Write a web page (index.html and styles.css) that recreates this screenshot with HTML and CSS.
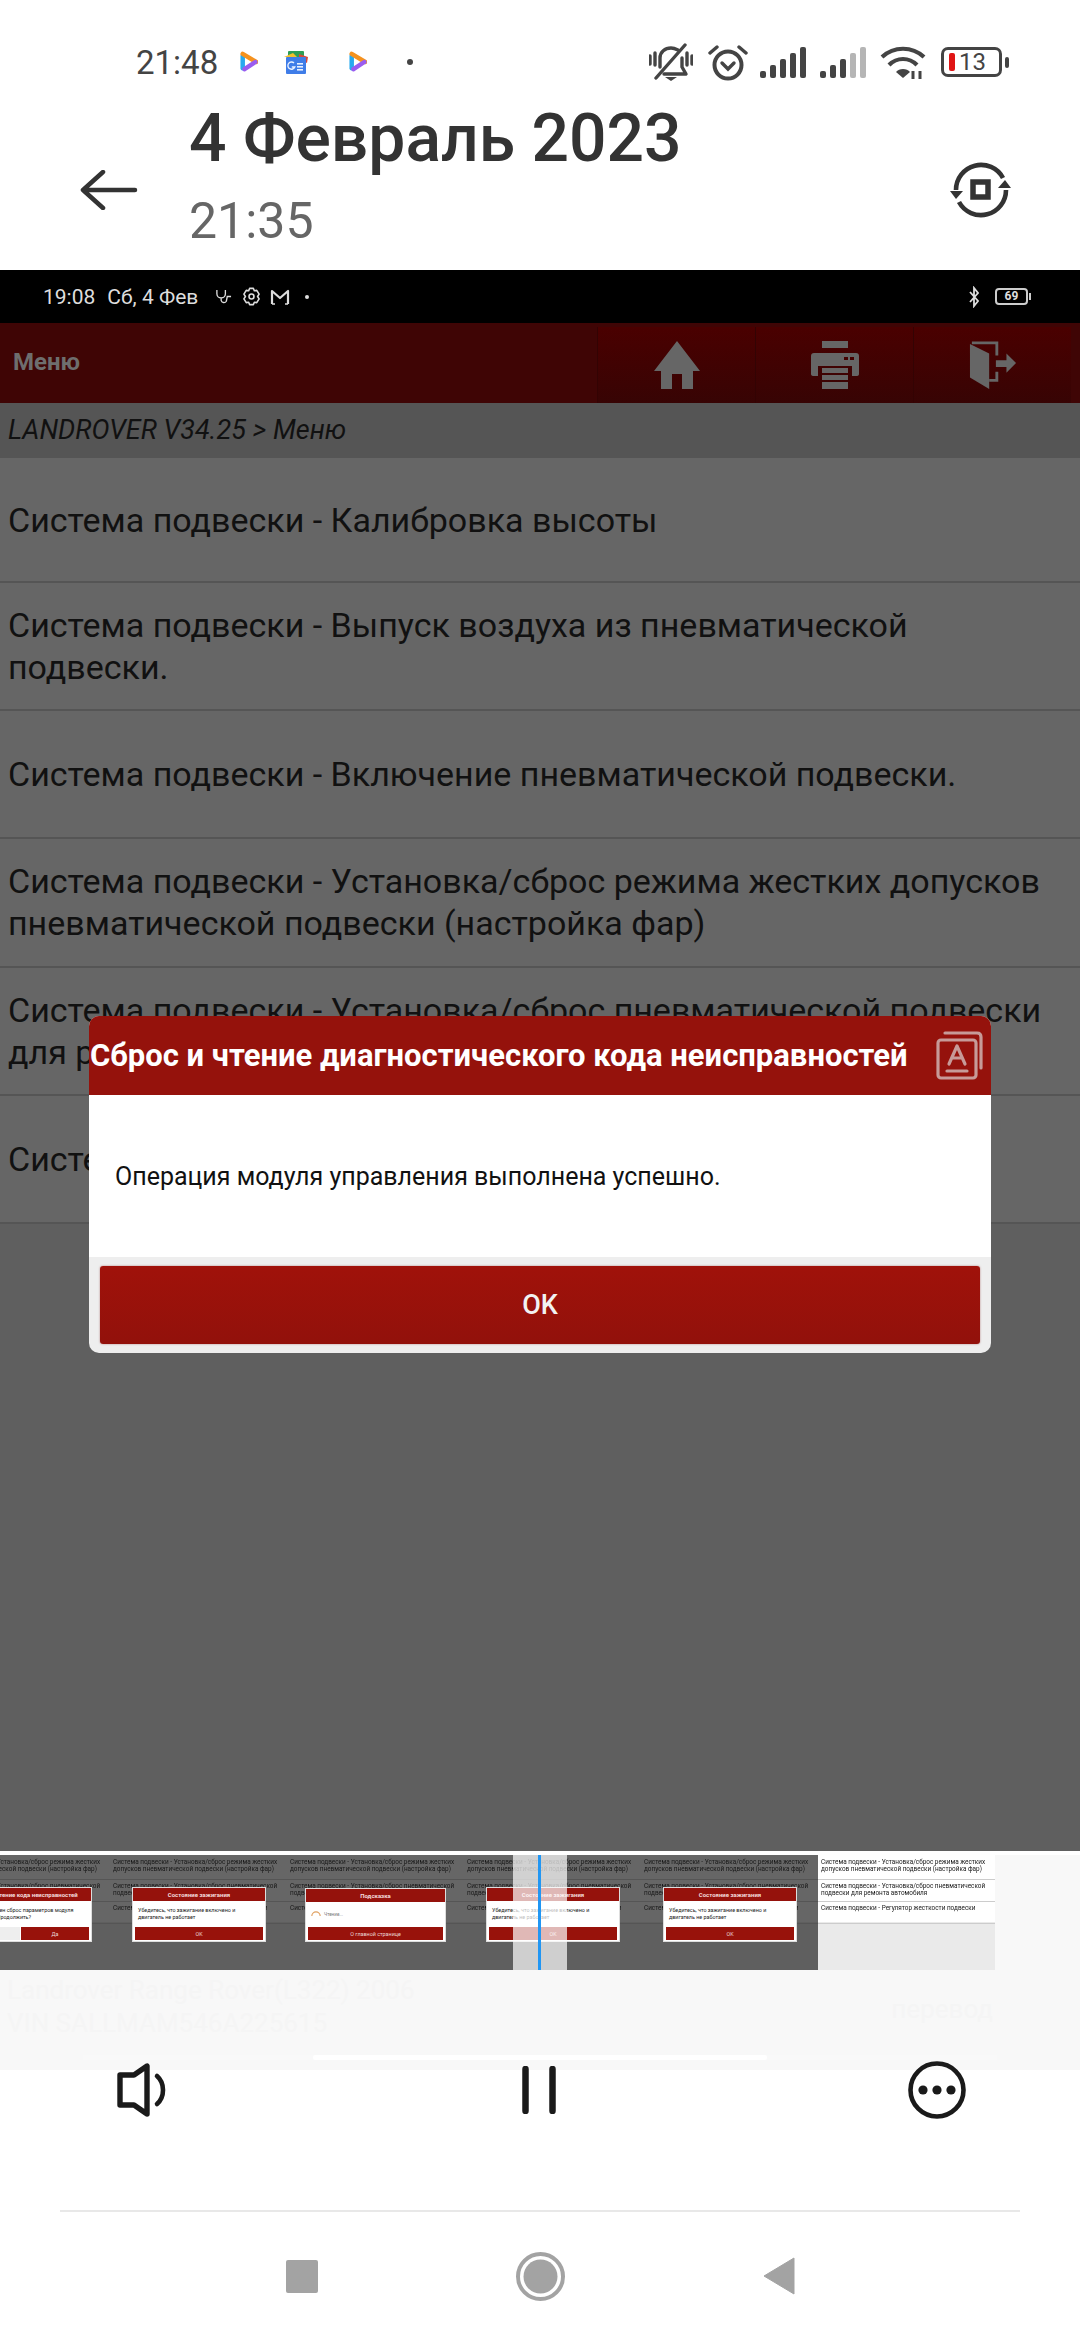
FILE: index.html
```html
<!DOCTYPE html>
<html lang="ru">
<head>
<meta charset="utf-8">
<title>Запись экрана</title>
<link rel="stylesheet" href="styles.css">
</head>
<body>
<div class="page">
  <div class="statusbar">
    <span class="clock">21:48</span>
    <span class="notif">
      <svg class="ic-play" viewBox="0 0 20 24"><path d="M3 5 V19" stroke="#29a9ee" stroke-width="5" stroke-linecap="round" fill="none"/><path d="M3 3 L18 12" stroke="#f5921e" stroke-width="5" stroke-linecap="round" fill="none"/><path d="M17 12 L5 20" stroke="#9a5cf0" stroke-width="5" stroke-linecap="round" fill="none"/></svg>
      <svg class="ic-news" viewBox="0 0 26 23"><rect x="5" y="0" width="16" height="8" rx="1" fill="#2f9e57"/><path d="M1 6 L10 2 L14 6z" fill="#f5c02e"/><path d="M16 3 L25 6 L24 12 L16 8z" fill="#d9483b"/><rect x="3" y="6" width="20" height="17" rx="1" fill="#3f7de8"/><rect x="14" y="12" width="6" height="1.6" fill="#e8f0ff"/><rect x="14" y="15" width="6" height="1.6" fill="#e8f0ff"/><rect x="14" y="18" width="6" height="1.6" fill="#e8f0ff"/><path d="M11 12 a3.6 3.6 0 1 0 0.8 4 h-3" stroke="#e8f0ff" stroke-width="1.4" fill="none"/></svg>
      <svg class="ic-play" viewBox="0 0 20 24"><path d="M3 5 V19" stroke="#29a9ee" stroke-width="5" stroke-linecap="round" fill="none"/><path d="M3 3 L18 12" stroke="#f5921e" stroke-width="5" stroke-linecap="round" fill="none"/><path d="M17 12 L5 20" stroke="#9a5cf0" stroke-width="5" stroke-linecap="round" fill="none"/></svg>
      <span class="dot"></span>
    </span>
    <span class="sys">
      <svg class="ic-bell" viewBox="0 0 44 39"><g fill="none" stroke="#444" stroke-width="3.4" stroke-linecap="round" stroke-linejoin="round"><path d="M11 24 V15 C11 9 16 5 22 5 C25 5 27 6 29 7"/><path d="M33 15 V24 L37 31 H15"/><path d="M7 35 L36 2"/><path d="M1 13 V21"/><path d="M6 10 V22"/><path d="M38 10 V22"/><path d="M43 13 V21"/></g><path d="M16 34 H28 L22 38z" fill="#444"/></svg>
      <svg class="ic-alarm" viewBox="0 0 40 37"><g fill="none" stroke="#444" stroke-linecap="round"><circle cx="20" cy="21" r="13.5" stroke-width="4"/><path d="M14 19 L20 25 L26 19" stroke-width="3.4"/><path d="M2 9 L9 3" stroke-width="3.4"/><path d="M38 9 L31 3" stroke-width="3.4"/></g></svg>
      <svg class="ic-signal" viewBox="0 0 47 31"><g fill="#444"><rect x="0" y="24" width="6" height="7" rx="2"/><rect x="10" y="18" width="6" height="13" rx="2"/><rect x="20" y="12" width="6" height="19" rx="2"/><rect x="30" y="6" width="6" height="25" rx="2"/><rect x="40" y="0" width="6" height="31" rx="2"/></g></svg>
      <svg class="ic-signal ic-signal-2" viewBox="0 0 47 31"><g fill="#444"><rect x="0" y="24" width="6" height="7" rx="2"/><rect x="10" y="18" width="6" height="13" rx="2"/><rect x="20" y="12" width="6" height="19" rx="2"/></g><g fill="#b5b5b5"><rect x="30" y="6" width="6" height="25" rx="2"/><rect x="40" y="0" width="6" height="31" rx="2"/></g></svg>
      <svg class="ic-wifi" viewBox="0 0 46 34"><g fill="none" stroke="#444" stroke-width="4.2"><path d="M2 12 C14 1 32 1 44 12"/><path d="M9 20 C17 12 29 12 37 20"/></g><path d="M16 27 C19 23 27 23 30 27 L23 33z" fill="#444"/><path d="M33 26 v8 M40 26 v8" stroke="#444" stroke-width="3"/></svg>
      <span class="battery"><span class="bat-body"><span class="bat-red"></span><span class="bat-num">13</span></span><span class="bat-nub"></span></span>
    </span>
  </div>

  <div class="header">
    <svg class="ic-back" viewBox="0 0 58 40"><path d="M55 20 H4 M23 2 L3 20 L23 38" fill="none" stroke="#333" stroke-width="4.5" stroke-linecap="round" stroke-linejoin="round"/></svg>
    <div class="heading">
      <div class="date">4 Февраль 2023</div>
      <div class="time">21:35</div>
    </div>
    <svg class="ic-rotate" viewBox="0 0 56 56"><g fill="none" stroke="#333" stroke-width="4.6"><path d="M3 28 A25 25 0 0 1 50 16"/><path d="M53 28 A25 25 0 0 1 6 40"/><rect x="20" y="20" width="15" height="15" stroke-width="5.5"/></g><path d="M46 27 L59 27 L53 19z" fill="#333" transform="translate(-1 -1)"/><path d="M-3 29 L10 29 L3 37z" fill="#333"/></svg>
  </div>

  <div class="screen">
    <div class="inner-status">
      <span class="inner-time">19:08</span>
      <span class="inner-date">Сб, 4 Фев</span>
      <svg class="ic-steth" viewBox="0 0 18 18"><path d="M2 2 V6 A4.5 4.5 0 0 0 11 6 V2 M6.5 11 V13 A3 3 0 0 0 12 14 L13 9 H17" fill="none" stroke="#ddd" stroke-width="1.4"/></svg>
      <svg class="ic-gear" viewBox="0 0 20 20"><g fill="none" stroke="#ddd" stroke-width="1.7"><path d="M8 1.5 H12 L13 4 L15.5 3.6 L18 7.5 L16.4 10 L18 12.5 L15.5 16.4 L13 16 L12 18.5 H8 L7 16 L4.5 16.4 L2 12.5 L3.6 10 L2 7.5 L4.5 3.6 L7 4z" stroke-linejoin="round"/><circle cx="10" cy="10" r="2.6"/></g></svg>
      <svg class="ic-m" viewBox="0 0 20 16"><path d="M2 15 V2 L10 9 L18 2 V15" fill="none" stroke="#ddd" stroke-width="2.2" stroke-linejoin="round"/><path d="M2 15 H5 M15 15 H18" stroke="#ddd" stroke-width="1.6"/></svg>
      <span class="inner-dot"></span>
      <svg class="ic-bt" viewBox="0 0 10 22"><path d="M1 6 L9 15 L5 20 V2 L9 7 L1 16" fill="none" stroke="#ddd" stroke-width="1.8"/></svg>
      <span class="inner-bat"><span class="inner-bat-body">69</span><span class="inner-bat-nub"></span></span>
    </div>

    <div class="appbar">
      <span class="appbar-title">Меню</span>
      <div class="appbar-tools">
        <div class="tool"><svg class="tool-icon" viewBox="0 0 46 48"><path d="M23 0 L46 30 H39 V48 H28 V33 H18 V48 H7 V30 H0z" fill="#666"/></svg></div>
        <div class="tool"><svg class="tool-icon" viewBox="0 0 48 48"><g fill="#666"><rect x="11" y="0" width="26" height="7"/><path d="M3 12 H45 Q48 12 48 15 V33 Q48 35 45 35 H41 V25 H7 V35 H3 Q0 35 0 33 V15 Q0 12 3 12z"/><rect x="11" y="27" width="26" height="5"/><rect x="11" y="34" width="26" height="5"/><rect x="11" y="41" width="26" height="7"/></g><rect x="33" y="16" width="4" height="3" fill="#400"/><rect x="39" y="16" width="4" height="3" fill="#400"/></svg></div>
        <div class="tool"><svg class="tool-icon" viewBox="0 0 48 50"><path d="M0 3 L20 13 V50 L0 38z" fill="#666"/><path d="M2 2 H28 V15 M28 32 V41 H20" fill="none" stroke="#666" stroke-width="3"/><path d="M27 20 H38 V13 L48 23 L38 33 V27 H27z" fill="#666"/></svg></div>
      </div>
    </div>

    <div class="crumb">LANDROVER V34.25 &gt; Меню</div>

    <div class="menu">
      <div class="menu-row menu-row-first">Система подвески - Калибровка высоты</div>
      <div class="menu-row">Система подвески - Выпуск воздуха из пневматической подвески.</div>
      <div class="menu-row">Система подвески - Включение пневматической подвески.</div>
      <div class="menu-row">Система подвески - Установка/сброс режима жестких допусков пневматической подвески (настройка фар)</div>
      <div class="menu-row">Система подвески - Установка/сброс пневматической подвески для ремонта автомобиля</div>
      <div class="menu-row">Система подвески - Регулятор жесткости подвески</div>
    </div>

    <div class="dialog">
      <div class="dialog-head">
        <span class="dialog-title">Сброс и чтение диагностического кода неисправностей</span>
        <svg class="dialog-icon" viewBox="0 0 47 49"><g fill="none" stroke="#c79a98" stroke-width="3.2" stroke-linecap="round" stroke-linejoin="round"><rect x="2" y="9" width="38" height="38" rx="3"/><path d="M9 2 H41 Q45 2 45 6 V37"/><path d="M13 33 L21 15 L29 33 M16 27 H26"/><path d="M11 40 H31"/></g></svg>
      </div>
      <div class="dialog-body">Операция модуля управления выполнена успешно.</div>
      <div class="dialog-foot"><div class="dialog-btn">OK</div></div>
    </div>
  </div>

  <div class="strip">
    <div class="frame frame-first">
      <div class="frame-rows"><div class="frame-row">Система подвески - Установка/сброс режима жестких допусков пневматической подвески (настройка фар)</div><div class="frame-row">Система подвески - Установка/сброс пневматической подвески для ремонта автомобиля</div><div class="frame-row">Система подвески - Регулятор жесткости подвески</div></div>
      <div class="mini mini-first"><div class="mini-head">Сброс и чтение кода неисправностей</div><div class="mini-body">Будет выполнен сброс параметров модуля управления. Продолжить?</div><div class="mini-foot"><div class="mini-btn mini-btn-light"></div><div class="mini-btn">Да</div></div></div>
    </div>
    <div class="frame">
      <div class="frame-rows"><div class="frame-row">Система подвески - Установка/сброс режима жестких допусков пневматической подвески (настройка фар)</div><div class="frame-row">Система подвески - Установка/сброс пневматической подвески для ремонта автомобиля</div><div class="frame-row">Система подвески - Регулятор жесткости подвески</div></div>
      <div class="mini"><div class="mini-head">Состояние зажигания</div><div class="mini-body">Убедитесь, что зажигание включено и двигатель не работает</div><div class="mini-foot"><div class="mini-btn">OK</div></div></div>
    </div>
    <div class="frame">
      <div class="frame-rows"><div class="frame-row">Система подвески - Установка/сброс режима жестких допусков пневматической подвески (настройка фар)</div><div class="frame-row">Система подвески - Установка/сброс пневматической подвески для ремонта автомобиля</div><div class="frame-row">Система подвески - Регулятор жесткости подвески</div></div>
      <div class="mini mini-wide"><div class="mini-head">Подсказка</div><div class="mini-body mini-body-wait"><svg class="mini-spin" viewBox="0 0 12 7"><path d="M1 6 A5 5 0 0 1 11 6" fill="none" stroke="#e0a060" stroke-width="1.4"/></svg><span>Чтение...</span></div><div class="mini-foot"><div class="mini-btn">О главной странице</div></div></div>
    </div>
    <div class="frame">
      <div class="frame-rows"><div class="frame-row">Система подвески - Установка/сброс режима жестких допусков пневматической подвески (настройка фар)</div><div class="frame-row">Система подвески - Установка/сброс пневматической подвески для ремонта автомобиля</div><div class="frame-row">Система подвески - Регулятор жесткости подвески</div></div>
      <div class="mini"><div class="mini-head">Состояние зажигания</div><div class="mini-body">Убедитесь, что зажигание включено и двигатель не работает</div><div class="mini-foot"><div class="mini-btn">OK</div></div></div>
    </div>
    <div class="frame">
      <div class="frame-rows"><div class="frame-row">Система подвески - Установка/сброс режима жестких допусков пневматической подвески (настройка фар)</div><div class="frame-row">Система подвески - Установка/сброс пневматической подвески для ремонта автомобиля</div><div class="frame-row">Система подвески - Регулятор жесткости подвески</div></div>
      <div class="mini"><div class="mini-head">Состояние зажигания</div><div class="mini-body">Убедитесь, что зажигание включено и двигатель не работает</div><div class="mini-foot"><div class="mini-btn">OK</div></div></div>
    </div>
    <div class="frame frame-light">
      <div class="frame-rows"><div class="frame-row">Система подвески - Установка/сброс режима жестких допусков пневматической подвески (настройка фар)</div><div class="frame-row">Система подвески - Установка/сброс пневматической подвески для ремонта автомобиля</div><div class="frame-row">Система подвески - Регулятор жесткости подвески</div></div>
    </div>
    <div class="playhead"><span class="playhead-line"></span></div>
  </div>

  <div class="panel">
    <div class="panel-info">
      <div>Landrover Range Rover(L322) 2006</div>
      <div>VIN SALLMAM546A225615</div>
    </div>
    <div class="panel-translate">перевод</div>
    <div class="panel-track"><div class="panel-thumb"></div></div>
  </div>

  <div class="controls">
    <svg class="ic-speaker" viewBox="0 0 52 54"><g fill="none" stroke="#1a1a1a" stroke-linejoin="round" stroke-linecap="round"><path d="M3 12 H17 L30 3 V51 L17 42 H3z" stroke-width="5.4"/><path d="M40 13 C48 20 48 34 40 41" stroke-width="4.6"/></g></svg>
    <svg class="ic-pause" viewBox="0 0 34 48"><g stroke="#1a1a1a" stroke-width="6.5" stroke-linecap="round"><path d="M3.5 3 V45"/><path d="M30.5 3 V45"/></g></svg>
    <svg class="ic-more" viewBox="0 0 58 58"><circle cx="29" cy="29" r="26.5" fill="none" stroke="#1a1a1a" stroke-width="4.6"/><g fill="#1a1a1a"><circle cx="15" cy="29" r="4.6"/><circle cx="29" cy="29" r="4.6"/><circle cx="43" cy="29" r="4.6"/></g></svg>
  </div>

  <div class="rule"></div>

  <div class="navbar">
    <span class="nav-square"></span>
    <svg class="nav-circle" viewBox="0 0 49 49"><circle cx="24.5" cy="24.5" r="22.5" fill="none" stroke="#a3a3a3" stroke-width="4"/><circle cx="24.5" cy="24.5" r="17" fill="#a3a3a3"/></svg>
    <svg class="nav-back" viewBox="0 0 32 38"><path d="M31 1 V37 L1 19z" fill="#a3a3a3" stroke="#a3a3a3" stroke-width="1" stroke-linejoin="round"/></svg>
  </div>
</div>
</body>
</html>
```
FILE: styles.css
```css
* { box-sizing: border-box; }
html, body { margin: 0; padding: 0; background: #fff; }
body { font-family: Roboto, "Noto Sans", sans-serif; color: #333; }
svg { display: block; flex: none; }
.page { width: 1080px; height: 2340px; display: flex; flex-direction: column; overflow: hidden; }

/* phone status bar */
.statusbar { height: 100px; padding: 24px 0 0 136px; display: flex; align-items: center; }
.clock { font-size: 33px; color: #444; width: 93px; }
.notif { display: flex; align-items: center; }
.ic-play { width: 18px; height: 22px; margin-left: 11px; margin-right: 25px; }
.ic-news { width: 26px; height: 23px; margin-right: 29px; }
.dot { width: 6px; height: 6px; border-radius: 50%; background: #444; margin-left: 15px; }
.sys { margin-left: auto; margin-right: 71px; display: flex; align-items: center; }
.ic-bell { width: 44px; height: 39px; margin-right: 15px; }
.ic-alarm { width: 40px; height: 37px; margin-right: 12px; }
.ic-signal { width: 47px; height: 31px; margin-right: 13px; }
.ic-signal-2 { margin-right: 13px; }
.ic-wifi { width: 46px; height: 34px; margin-right: 15px; }
.battery { display: flex; align-items: center; }
.bat-body { width: 61px; height: 30px; border: 3px solid #444; border-radius: 7px; display: flex; align-items: center; padding-left: 5px; }
.bat-red { width: 6px; height: 18px; background: #e01515; border-radius: 2px; margin-right: 4px; }
.bat-num { font-size: 24px; color: #444; line-height: 24px; }
.bat-nub { width: 4px; height: 11px; margin-left: 3px; background: #444; border-radius: 2px; }

/* recording header */
.header { height: 170px; display: flex; align-items: flex-start; }
.ic-back { width: 58px; height: 40px; margin: 70px 0 0 80px; }
.heading { margin-left: 51px; }
.date { font-size: 66px; line-height: 78px; font-weight: 500; color: #333; }
.time { font-size: 50px; line-height: 58px; color: #666; margin-top: 14px; }
.ic-rotate { width: 56px; height: 56px; margin: 62px 71px 0 auto; overflow: visible; }

/* recorded screen */
.screen { position: relative; height: 1581px; background: #5f5f5f; }
.inner-status { height: 53px; background: #000; display: flex; align-items: center; padding-left: 43px; color: #ddd; font-size: 21px; }
.inner-time { margin-right: 12px; }
.inner-date { margin-right: 17px; }
.ic-steth { width: 17px; height: 17px; margin-right: 10px; }
.ic-gear { width: 19px; height: 19px; margin-right: 9px; }
.ic-m { width: 20px; height: 16px; margin-right: 15px; }
.inner-dot { width: 4px; height: 4px; border-radius: 50%; background: #ddd; }
.ic-bt { width: 10px; height: 22px; margin-left: auto; margin-right: 16px; }
.inner-bat { display: flex; align-items: center; margin-right: 49px; }
.inner-bat-body { width: 33px; height: 17px; border: 2px solid #ccc; border-radius: 4px; font-size: 12px; font-weight: 700; line-height: 13px; text-align: center; color: #ddd; }
.inner-bat-nub { width: 2px; height: 7px; background: #ccc; margin-left: 1px; }

.appbar { height: 80px; background: #3f0505; display: flex; align-items: center; justify-content: space-between; padding-top: 4px; }
.appbar-title { font-size: 24px; font-weight: 700; color: #6e6e6e; margin-left: 13px; margin-top: -7px; }
.appbar-tools { display: flex; height: 76px; margin-right: 9px; }
.tool { width: 158px; display: flex; align-items: center; justify-content: center; background: linear-gradient(#4a0000, #370404); border-left: 1px solid #330303; }
.tool-icon { width: 48px; height: 48px; }

.crumb { height: 55px; background: #555; color: #111; font-size: 27px; font-style: italic; line-height: 55px; padding-left: 8px; }

.menu { background: #666; }
.menu-row { height: 128.2px; padding: 0 8px; display: flex; align-items: center; font-size: 34px; line-height: 42px; color: #111; border-bottom: 2px solid #555; }
.menu-row-first { height: 125px; }

/* modal */
.dialog { position: absolute; left: 89px; top: 746px; width: 902px; border-radius: 10px; overflow: hidden; background: #eee; }
.dialog-head { height: 79px; background: #95120c; display: flex; align-items: center; justify-content: space-between; padding: 0 8px 0 1px; }
.dialog-title { font-size: 31px; font-weight: 700; color: #fff; white-space: nowrap; }
.dialog-icon { width: 47px; height: 49px; }
.dialog-body { height: 162px; background: #fff; color: #111; font-size: 25px; display: flex; align-items: center; padding-left: 26px; }
.dialog-foot { height: 96px; padding: 9px 11px; }
.dialog-btn { height: 78px; border-radius: 3px; background: linear-gradient(#a0120a, #92110b); color: #f2f2f2; font-size: 27px; font-weight: 500; display: flex; align-items: center; justify-content: center; box-shadow: 0 0 2px rgba(120, 0, 0, .5); }

/* thumbnails */
.strip { position: relative; height: 115px; margin-top: 4px; display: flex; background: #f8f8f8; overflow: hidden; }
.frame { position: relative; flex: none; width: 177px; height: 115px; background: #5f5f5f; overflow: hidden; color: #181818; }
.frame-first { margin-left: -67px; }
.frame-rows { height: 67px; background: #666; font-size: 6.4px; line-height: 7px; display: flex; flex-direction: column; }
.frame-row { height: 22px; flex: none; padding: 3px 3px 0; display: flex; align-items: flex-start; border-bottom: 1px solid #555; filter: blur(.25px); }
.frame-row:first-child { height: 25px; padding-top: 4px; }
.frame-light { width: 177px; background: #eaeaea; }
.frame-light .frame-rows { background: #fff; }
.frame-light .frame-row { border-bottom-color: #ccc; }
.mini { position: absolute; left: 22px; top: 32px; width: 134px; height: 55px; background: #fff; border: 1px solid #ddd; display: flex; flex-direction: column; }
.mini-first { left: 25px; }
.mini-wide { left: 18px; top: 33px; width: 141px; height: 54px; }
.mini-head { height: 13px; flex: none; background: #95120c; color: #f4dcdc; font-size: 6px; font-weight: 700; line-height: 13px; text-align: center; }
.mini-body { flex: 1; padding: 3px 5px; font-size: 5.4px; line-height: 7px; display: flex; align-items: center; color: #222; }
.mini-body-wait { gap: 3px; font-size: 4.6px; color: #777; }
.mini-spin { width: 10px; height: 6px; }
.mini-foot { height: 15px; flex: none; padding: 1px 2px 1px; display: flex; }
.mini-btn { flex: 1; background: #98120b; color: #e9d6d6; font-size: 5.4px; display: flex; align-items: center; justify-content: center; }
.mini-btn-light { background: #eee; margin-right: 1px; }
.mini-first .mini-btn:last-child { flex: none; width: 68px; }
.playhead { position: absolute; left: 513px; top: 0; width: 54px; height: 115px; background: rgba(255, 255, 255, .7); }
.playhead-line { position: absolute; left: 25px; top: 0; width: 3px; height: 115px; background: #2196f3; display: block; }

/* metadata panel (text almost invisible) */
.panel { height: 100px; background: #f8f8f8; display: grid; grid-template-columns: 1fr auto; grid-template-rows: 85px 15px; padding-top: 0; color: #f5f5f5; }
.panel-info { font-size: 26px; line-height: 33px; padding: 4px 0 0 7px; }
.panel-translate { font-size: 26px; padding: 24px 87px 0 0; }
.panel-track { grid-column: 1 / 3; height: 5px; margin: 0 83px; background: #f9f9f9; }
.panel-thumb { height: 5px; margin: 0 230px; background: #fff; border-radius: 2px; }

/* player controls */
.controls { margin-top: -10px; padding: 0 114px 0 117px; display: flex; align-items: center; justify-content: space-between; height: 60px; }
.ic-speaker { width: 52px; height: 54px; }
.ic-pause { width: 34px; height: 48px; }
.ic-more { width: 58px; height: 58px; }

.rule { margin: 90px 60px 0; height: 2px; background: #e8e8e8; }

.navbar { height: 128px; display: flex; align-items: center; justify-content: center; gap: 198px; }
.nav-square { width: 32px; height: 33px; background: #a3a3a3; border-radius: 2px; }
.nav-circle { width: 49px; height: 49px; }
.nav-back { width: 32px; height: 38px; }
```
